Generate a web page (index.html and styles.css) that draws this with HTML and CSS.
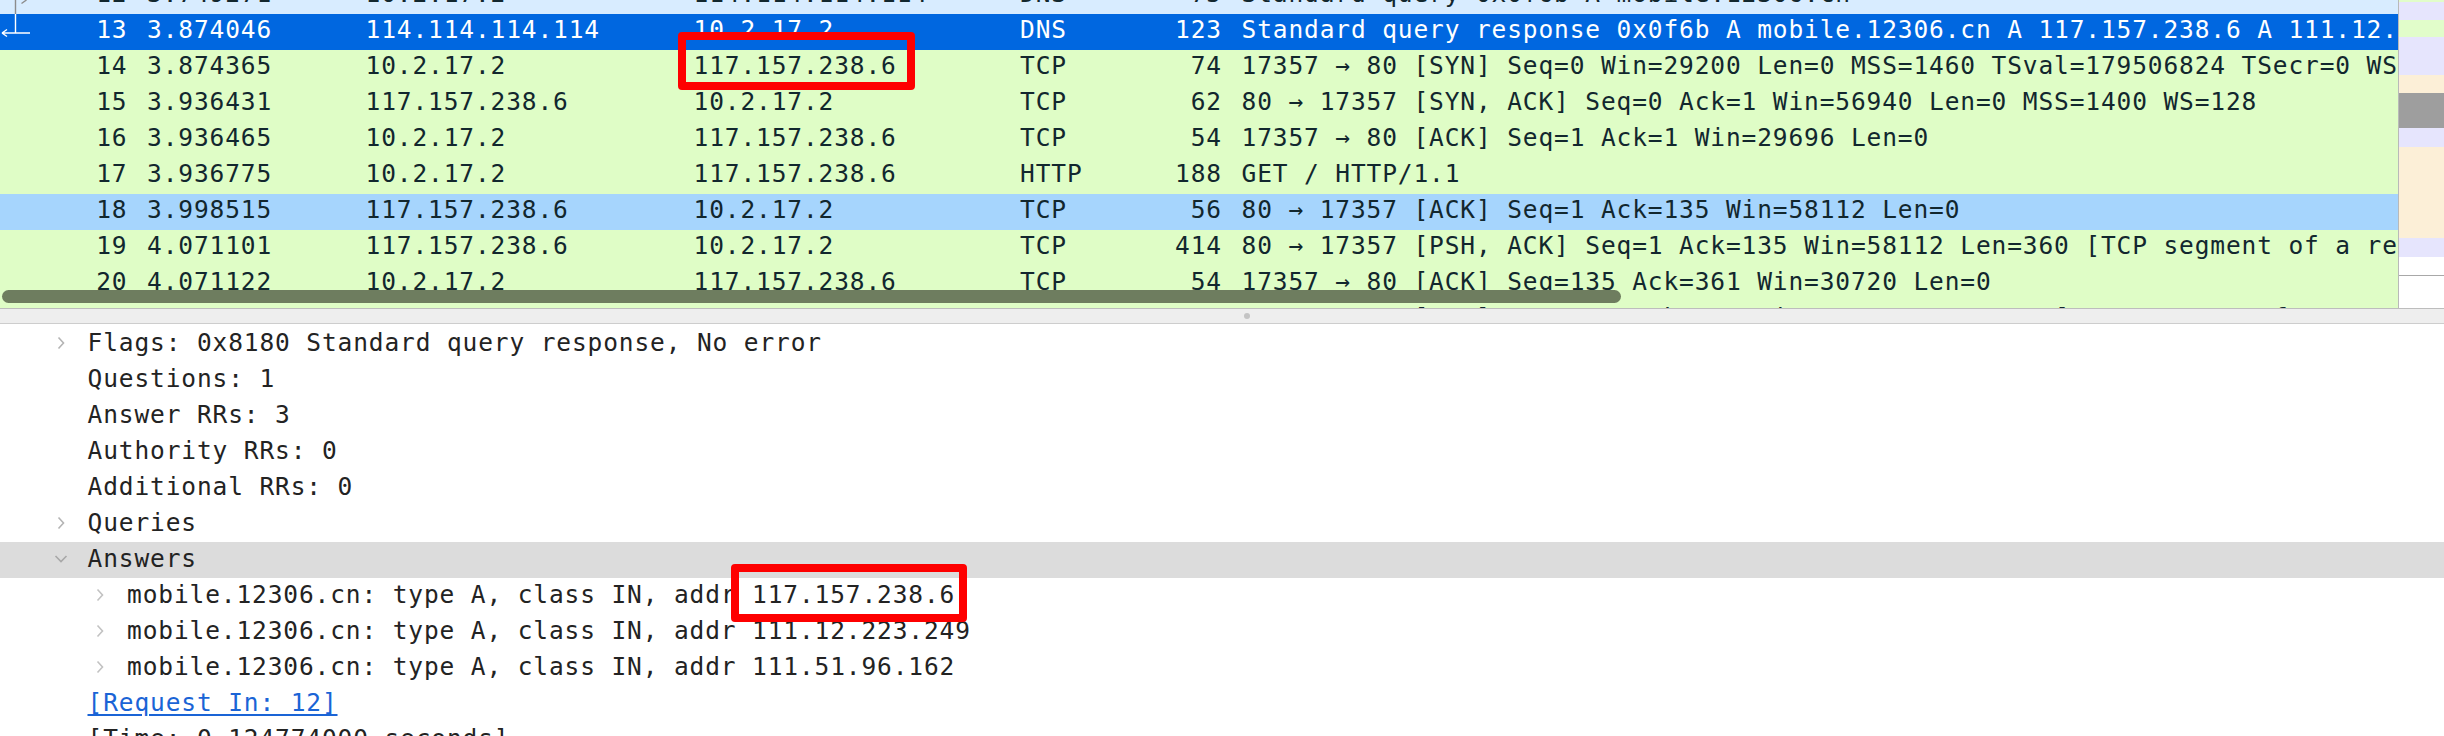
FILE: index.html
```html
<!DOCTYPE html>
<html lang="en">
<head>
<meta charset="utf-8">
<title>Wireshark – DNS response</title>
<link rel="stylesheet" href="styles.css">
</head>
<body>
<div class="app">
  <section class="packets">
    <div class="list">
      <div class="rows">
        <div class="row udp">
          <span class="rel"><svg class="relsvg" width="60" height="36" viewBox="0 0 60 36"><path d="M15.5 18V36M21.5 25.5L26.5 22" stroke="#8c8c8c" stroke-width="1.4" fill="none"/></svg></span>
          <span class="no">12</span><span class="time">3.749271</span><span class="src">10.2.17.2</span><span class="dst">114.114.114.114</span><span class="proto">DNS</span><span class="len">75</span><span class="info">Standard query 0x0f6b A mobile.12306.cn</span>
        </div>
        <div class="row selected">
          <span class="rel"><svg class="relsvg" width="60" height="36" viewBox="0 0 60 36"><path d="M15.5 0V19M2 19H30M2 19L7 15.5M2 19L7 22.5" stroke="#ffffff" stroke-width="1.4" fill="none"/></svg></span>
          <span class="no">13</span><span class="time">3.874046</span><span class="src">114.114.114.114</span><span class="dst">10.2.17.2</span><span class="proto">DNS</span><span class="len">123</span><span class="info">Standard query response 0x0f6b A mobile.12306.cn A 117.157.238.6 A 111.12.223.249 A 111.51.96.162</span>
        </div>
        <div class="row tcp">
          <span class="rel"></span><span class="no">14</span><span class="time">3.874365</span><span class="src">10.2.17.2</span><span class="dst">117.157.238.6</span><span class="proto">TCP</span><span class="len">74</span><span class="info">17357 → 80 [SYN] Seq=0 Win=29200 Len=0 MSS=1460 TSval=179506824 TSecr=0 WS=128</span>
        </div>
        <div class="row tcp">
          <span class="rel"></span><span class="no">15</span><span class="time">3.936431</span><span class="src">117.157.238.6</span><span class="dst">10.2.17.2</span><span class="proto">TCP</span><span class="len">62</span><span class="info">80 → 17357 [SYN, ACK] Seq=0 Ack=1 Win=56940 Len=0 MSS=1400 WS=128</span>
        </div>
        <div class="row tcp">
          <span class="rel"></span><span class="no">16</span><span class="time">3.936465</span><span class="src">10.2.17.2</span><span class="dst">117.157.238.6</span><span class="proto">TCP</span><span class="len">54</span><span class="info">17357 → 80 [ACK] Seq=1 Ack=1 Win=29696 Len=0</span>
        </div>
        <div class="row tcp">
          <span class="rel"></span><span class="no">17</span><span class="time">3.936775</span><span class="src">10.2.17.2</span><span class="dst">117.157.238.6</span><span class="proto">HTTP</span><span class="len">188</span><span class="info">GET / HTTP/1.1</span>
        </div>
        <div class="row hover">
          <span class="rel"></span><span class="no">18</span><span class="time">3.998515</span><span class="src">117.157.238.6</span><span class="dst">10.2.17.2</span><span class="proto">TCP</span><span class="len">56</span><span class="info">80 → 17357 [ACK] Seq=1 Ack=135 Win=58112 Len=0</span>
        </div>
        <div class="row tcp">
          <span class="rel"></span><span class="no">19</span><span class="time">4.071101</span><span class="src">117.157.238.6</span><span class="dst">10.2.17.2</span><span class="proto">TCP</span><span class="len">414</span><span class="info">80 → 17357 [PSH, ACK] Seq=1 Ack=135 Win=58112 Len=360 [TCP segment of a reassembled PDU]</span>
        </div>
        <div class="row tcp">
          <span class="rel"></span><span class="no">20</span><span class="time">4.071122</span><span class="src">10.2.17.2</span><span class="dst">117.157.238.6</span><span class="proto">TCP</span><span class="len">54</span><span class="info">17357 → 80 [ACK] Seq=135 Ack=361 Win=30720 Len=0</span>
        </div>
        <div class="row tcp">
          <span class="rel"></span><span class="no">21</span><span class="time">4.071588</span><span class="src">117.157.238.6</span><span class="dst">10.2.17.2</span><span class="proto">TCP</span><span class="len">1304</span><span class="info">80 → 17357 [ACK] Seq=361 Ack=135 Win=58112 Len=1250 [TCP segment of a reassembled PDU]</span>
        </div>
      </div>
    </div>
    <div class="minimap">
      <div class="strip">
        <span class="band green" style="height:2px"></span>
        <span class="band lav" style="height:18px"></span>
        <span class="band green" style="height:17px"></span>
        <span class="band lav" style="height:38px"></span>
        <span class="band cream" style="height:18px"></span>
        <span class="band thumb" style="height:35px"></span>
        <span class="band lav" style="height:19px"></span>
        <span class="band cream" style="height:91px"></span>
        <span class="band lav" style="height:19px"></span>
        <span class="band blank" style="height:18px"></span>
      </div>
    </div>
    <div class="hscroll"></div>
  </section>

  <div class="splitter"><span class="grip"></span></div>

  <section class="details">
    <div class="node l1"><i class="chev"><svg width="10" height="14" viewBox="0 0 10 14"><path d="M2.5 1.5L7.5 7L2.5 12.5" stroke="#b4b4b4" stroke-width="1.6" fill="none"/></svg></i><span class="txt">Flags: 0x8180 Standard query response, No error</span></div>
    <div class="node l1"><i class="chev"></i><span class="txt">Questions: 1</span></div>
    <div class="node l1"><i class="chev"></i><span class="txt">Answer RRs: 3</span></div>
    <div class="node l1"><i class="chev"></i><span class="txt">Authority RRs: 0</span></div>
    <div class="node l1"><i class="chev"></i><span class="txt">Additional RRs: 0</span></div>
    <div class="node l1"><i class="chev"><svg width="10" height="14" viewBox="0 0 10 14"><path d="M2.5 1.5L7.5 7L2.5 12.5" stroke="#b4b4b4" stroke-width="1.6" fill="none"/></svg></i><span class="txt">Queries</span></div>
    <div class="node l1 current"><i class="chev"><svg width="14" height="10" viewBox="0 0 14 10"><path d="M1.5 2L7 7.5L12.5 2" stroke="#a8a8a8" stroke-width="1.6" fill="none"/></svg></i><span class="txt">Answers</span></div>
    <div class="node l2"><i class="chev"><svg width="10" height="14" viewBox="0 0 10 14"><path d="M2.5 1.5L7.5 7L2.5 12.5" stroke="#c2c2c2" stroke-width="1.6" fill="none"/></svg></i><span class="txt">mobile.12306.cn: type A, class IN, addr 117.157.238.6</span></div>
    <div class="node l2"><i class="chev"><svg width="10" height="14" viewBox="0 0 10 14"><path d="M2.5 1.5L7.5 7L2.5 12.5" stroke="#c2c2c2" stroke-width="1.6" fill="none"/></svg></i><span class="txt">mobile.12306.cn: type A, class IN, addr 111.12.223.249</span></div>
    <div class="node l2"><i class="chev"><svg width="10" height="14" viewBox="0 0 10 14"><path d="M2.5 1.5L7.5 7L2.5 12.5" stroke="#c2c2c2" stroke-width="1.6" fill="none"/></svg></i><span class="txt">mobile.12306.cn: type A, class IN, addr 111.51.96.162</span></div>
    <div class="node l1"><i class="chev"></i><a class="txt link">[Request In: 12]</a></div>
    <div class="node l1"><i class="chev"></i><span class="txt">[Time: 0.124774000 seconds]</span></div>
  </section>

  <div class="mark mark-list"></div>
  <div class="mark mark-detail"></div>
</div>
</body>
</html>
```

FILE: styles.css
```css
html, body {
  margin: 0;
  padding: 0;
  background: #ffffff;
}

body {
  width: 2444px;
  height: 736px;
  overflow: hidden;
  font-family: "DejaVu Sans Mono", "Liberation Mono", monospace;
  font-size: 24.5px;
  letter-spacing: 0.875px;
}

.app {
  position: relative;
  width: 2444px;
  height: 736px;
  overflow: hidden;
}

/* ---------- packet list ---------- */
.packets {
  position: relative;
  display: flex;
  height: 308px;
  overflow: hidden;
}

.list {
  flex: 1;
  min-width: 0;
  overflow: hidden;
  border-right: 1px solid #b9b9b9;
}

.rows {
  margin-top: -22px;
}

.row {
  display: grid;
  grid-template-columns: 60px 67.5px 238px 328px 326.5px 120px 82px 1fr;
  height: 36px;
  line-height: 32px;
  color: #12272e;
  white-space: nowrap;
}

.row > span {
  overflow: hidden;
  min-width: 0;
}

.row.udp { background: #d8ecff; }
.row.tcp { background: #dffdc6; }
.row.selected { background: #0067e0; color: #ffffff; }
.row.hover { background: #a6d5fd; }

.rel {
  position: relative;
  overflow: visible !important;
}

.relsvg {
  display: block;
}

.no, .len { text-align: right; }
.time { padding-left: 19.5px; }
.info { padding-left: 19.5px; }

/* minimap on the right */
.minimap {
  width: 45px;
  flex: none;
}

.strip {
  display: flex;
  flex-direction: column;
  border-bottom: 1px solid #a8a8a8;
}

.band { display: block; }
.band.green { background: #e1fdca; }
.band.lav { background: #e6e5fd; }
.band.cream { background: #fcefd7; }
.band.thumb { background: #9e9e9e; }
.band.blank { background: #ffffff; }

.hscroll {
  position: absolute;
  left: 2px;
  top: 290px;
  width: 1619px;
  height: 13px;
  border-radius: 7px;
  background: #6e7d5f;
}

/* ---------- splitter ---------- */
.splitter {
  height: 14px;
  background: #eeeeee;
  border-top: 1px solid #bdbdbd;
  border-bottom: 1px solid #cdcdcd;
  display: flex;
  align-items: center;
  justify-content: center;
}

.grip {
  width: 6px;
  height: 6px;
  border-radius: 50%;
  background: #c4c4c4;
  margin-left: 50px;
}

/* ---------- details tree ---------- */
.details {
  padding-top: 2px;
  color: #232323;
}

.node {
  display: flex;
  height: 36px;
  line-height: 33px;
  white-space: nowrap;
}

.node.l1 { padding-left: 51.5px; }
.node.l2 { padding-left: 91px; }
.node.current { background: #dcdcdc; }

.chev {
  flex: none;
  width: 18px;
  height: 34px;
  margin-right: 18px;
  display: flex;
  align-items: center;
  justify-content: center;
}

.chev svg { display: block; }

.link {
  color: #1a64d6;
  text-decoration: underline;
  text-underline-offset: 3px;
}

/* ---------- red annotation boxes ---------- */
.mark {
  position: absolute;
  box-sizing: border-box;
  border: 8px solid #fe0000;
  border-radius: 4px;
}

.mark-list {
  left: 678px;
  top: 32px;
  width: 237px;
  height: 58px;
}

.mark-detail {
  left: 731px;
  top: 564px;
  width: 236px;
  height: 58px;
}
```
